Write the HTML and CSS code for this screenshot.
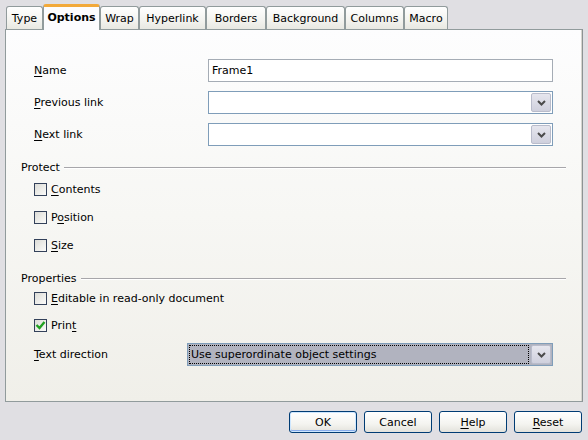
FILE: index.html
```html
<!DOCTYPE html>
<html>
<head>
<meta charset="utf-8">
<link rel="stylesheet" href="styles.css">
</head>
<body>
<div class="dialog">
  <div class="tabs">
    <div class="tab t-type">Type</div>
    <div class="tab active t-options">Options</div>
    <div class="tab t-wrap">Wrap</div>
    <div class="tab t-hyper">Hyperlink</div>
    <div class="tab t-borders">Borders</div>
    <div class="tab t-bg">Background</div>
    <div class="tab t-cols">Columns</div>
    <div class="tab t-macro">Macro</div>
  </div>
  <div class="panel">
    <div class="row field-row first">
      <div class="label wide"><u>N</u>ame</div>
      <div class="textfield">Frame1</div>
    </div>
    <div class="row field-row">
      <div class="label wide"><u>P</u>revious link</div>
      <div class="combo"><span class="combo-text"></span><span class="drop"><svg width="9" height="6" viewBox="0 0 9 6"><path d="M1 1 L4.5 4.5 L8 1" fill="none" stroke="#4a4a4a" stroke-width="2"/></svg></span></div>
    </div>
    <div class="row field-row">
      <div class="label wide"><u>N</u>ext link</div>
      <div class="combo"><span class="combo-text"></span><span class="drop"><svg width="9" height="6" viewBox="0 0 9 6"><path d="M1 1 L4.5 4.5 L8 1" fill="none" stroke="#4a4a4a" stroke-width="2"/></svg></span></div>
    </div>

    <div class="heading h-protect"><span>Protect</span><span class="rule"></span></div>
    <div class="check-row"><span class="box"></span><span><u>C</u>ontents</span></div>
    <div class="check-row"><span class="box"></span><span>P<u>o</u>sition</span></div>
    <div class="check-row"><span class="box"></span><span><u>S</u>ize</span></div>

    <div class="heading h-props"><span>Properties</span><span class="rule"></span></div>
    <div class="check-row short"><span class="box"></span><span><u>E</u>ditable in read-only document</span></div>
    <div class="check-row"><span class="box checked"><svg width="11" height="11" viewBox="0 0 11 11"><path d="M1.5 5 L4.5 8 L9.5 2" fill="none" stroke="#21a121" stroke-width="2.4"/></svg></span><span>Prin<u>t</u></span></div>
    <div class="row dir-row">
      <div class="label narrow"><u>T</u>ext direction</div>
      <div class="combo selected"><span class="combo-text"><span class="focus">Use superordinate object settings</span></span><span class="drop"><svg width="9" height="6" viewBox="0 0 9 6"><path d="M1 1 L4.5 4.5 L8 1" fill="none" stroke="#4a4a4a" stroke-width="2"/></svg></span></div>
    </div>
  </div>
  <div class="buttons">
    <button class="btn default">OK</button>
    <button class="btn">Cancel</button>
    <button class="btn"><u>H</u>elp</button>
    <button class="btn"><u>R</u>eset</button>
  </div>
</div>
</body>
</html>
```

FILE: styles.css
```css
html, body {
  margin: 0;
  padding: 0;
}
body {
  width: 588px;
  height: 440px;
  background: #e0dfe3;
  font-family: "DejaVu Sans", Tahoma, sans-serif;
  font-size: 11px;
  color: #000;
  overflow: hidden;
}
u {
  text-decoration: underline;
  text-underline-offset: 2px;
}
.dialog {
  padding: 4px 5px 0 5px;
}
.tabs {
  display: flex;
  height: 25px;
  padding-left: 1px;
  position: relative;
  z-index: 2;
}
.tab {
  box-sizing: border-box;
  margin-top: 2px;
  height: 23px;
  border: 1px solid #919b9c;
  border-bottom: none;
  border-radius: 3px 3px 0 0;
  background: linear-gradient(#ffffff, #f3f3ef 60%, #e8e8e2);
  display: flex;
  align-items: center;
  justify-content: center;
  white-space: nowrap;
}
.t-type { width: 37px; }
.t-options { width: 57px; }
.t-wrap { width: 39px; }
.t-hyper { width: 67px; }
.t-borders { width: 60px; }
.t-bg { width: 79px; }
.t-cols { width: 59px; }
.t-macro { width: 44px; }
.tab.active {
  margin-top: 0;
  height: 26px;
  background: #fcfcfe;
  font-weight: bold;
  border-top: 3px solid #f7b54a;
  border-color: #f2a93a #919b9c #919b9c;
  padding-bottom: 2px;
}
.panel {
  box-sizing: border-box;
  height: 373px;
  width: 578px;
  border: 1px solid #919b9c;
  border-right-color: #8c9394;
  box-shadow: inset -1px 0 0 #d6d5cf;
  background: linear-gradient(#fdfdfe, #f7f7f4 50%, #f0efe9);
  padding: 29px 16px 0 15px;
}
.row {
  display: flex;
  align-items: center;
}
.label {
  padding-left: 13px;
  box-sizing: border-box;
}
.label.wide { width: 187px; }
.label.narrow { width: 166px; }
.field-row {
  height: 23px;
  margin-top: 9px;
}
.field-row.first { margin-top: 0; }
.textfield {
  box-sizing: border-box;
  width: 345px;
  height: 23px;
  border: 1px solid #a5acb5;
  background: #fff;
  padding-left: 3px;
  display: flex;
  align-items: center;
}
.combo {
  box-sizing: border-box;
  width: 345px;
  height: 23px;
  border: 1px solid #7f9db9;
  background: #fff;
  display: flex;
  align-items: center;
  padding: 1px;
}
.combo-text {
  flex: 1;
  height: 19px;
  display: flex;
  align-items: center;
}
.drop {
  box-sizing: border-box;
  width: 20px;
  height: 19px;
  border: 1px solid #b9bccb;
  border-radius: 2px;
  background: linear-gradient(#e6e6ee, #cfd0dd);
  display: flex;
  align-items: center;
  justify-content: center;
}
.heading {
  display: flex;
  align-items: center;
  height: 14px;
  margin-top: 14px;
  color: #000;
}
.heading .rule {
  flex: 1;
  height: 1px;
  margin-left: 4px;
  background: #a7a6aa;
  box-shadow: 0 1px 0 #fff;
}
.h-props { margin-top: 12px; }
.check-row {
  display: flex;
  align-items: center;
  height: 28px;
  padding-left: 13px;
}
.h-protect + .check-row { margin-top: 1px; }
.check-row.short { height: 26px; }
.box {
  box-sizing: border-box;
  width: 13px;
  height: 13px;
  border: 1px solid #33415a;
  background: linear-gradient(135deg, #dcdcd7, #fbfbf9);
  margin-right: 4px;
  display: flex;
  align-items: center;
  justify-content: center;
}
.dir-row {
  height: 23px;
  margin-top: 4px;
}
.combo.selected {
  width: 366px;
  background: #b1b3bf;
}
.combo.selected .combo-text {
  margin-right: 2px;
  border: 1px dotted #000;
  box-sizing: border-box;
  padding-left: 1px;
}
.buttons {
  display: flex;
  justify-content: flex-end;
  gap: 7px;
  padding-right: 1px;
  margin-top: 9px;
}
.btn {
  box-sizing: border-box;
  width: 68px;
  height: 22px;
  border: 1px solid #003c74;
  border-radius: 3px;
  background: linear-gradient(#ffffff, #f4f4f0 60%, #e3e2dc);
  font-family: "DejaVu Sans", Tahoma, sans-serif;
  font-size: 11px;
  color: #000;
  padding: 0;
}
.btn.default {
  box-shadow: inset 0 0 0 1px #cee7ff, inset 0 -1px 0 1px #89adec;
}
```
